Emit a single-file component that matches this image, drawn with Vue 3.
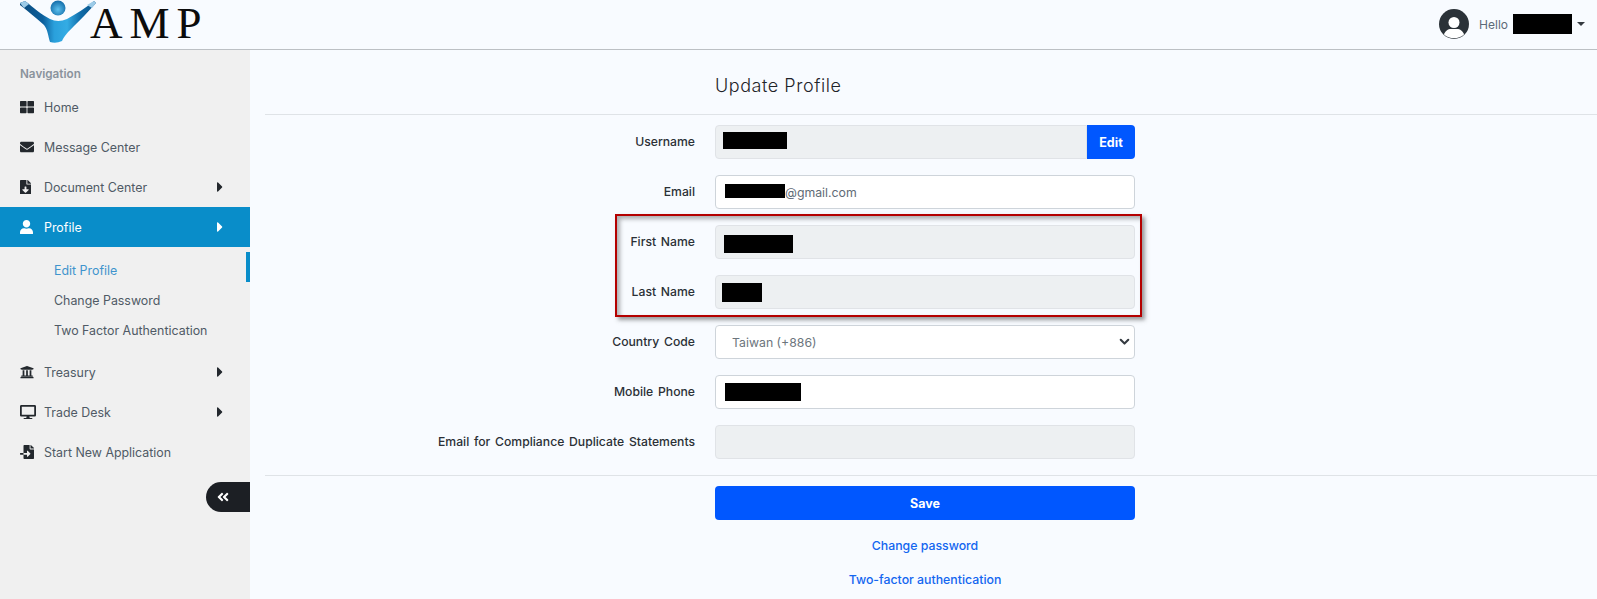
<template>
  <div class="page">
    <header class="topbar">
      <div class="logo">
        <svg class="logo__mark" width="78" height="44" viewBox="0 0 78 44">
          <defs>
            <linearGradient id="figure" x1="0" y1="0" x2="1" y2="0">
              <stop offset="0" stop-color="#0a4a7c" />
              <stop offset="0.3" stop-color="#0c5f9c" />
              <stop offset="0.45" stop-color="#2aa0dc" />
              <stop offset="0.62" stop-color="#34ace4" />
              <stop offset="0.8" stop-color="#0f6ba8" />
              <stop offset="1" stop-color="#0b5286" />
            </linearGradient>
            <radialGradient id="head" cx="0.5" cy="0.6" r="0.6">
              <stop offset="0" stop-color="#5cc0ee" />
              <stop offset="1" stop-color="#116ba8" />
            </radialGradient>
          </defs>
          <path d="M0 3 L5 1 C14 8 22 15 30 19 Q38 23 47 19 C56 14 66 8 74 1 L76 3 C68 12 60 20 54 26 C48 32 44 36 42 41 Q36 44 30 42 C28 36 28 30 24 25 C16 18 8 11 0 5 Z" fill="url(#figure)" />
          <circle cx="38" cy="8" r="7.5" fill="url(#head)" />
          <path d="M0 3 L5 1 L9 4 L4 8Z" fill="#9ccbe8" />
          <path d="M74 1 L76 3 L72 8 L67 5Z" fill="#9ccbe8" />
        </svg>
        <span class="logo__text">AMP</span>
      </div>
      <div class="user">
        <svg class="user__avatar" viewBox="0 0 30 30" width="30" height="30">
          <circle cx="15" cy="15" r="15" fill="#2b3238" />
          <circle cx="15" cy="13.5" r="5.5" fill="#fff" />
          <path d="M5 25.5 C6 22 9 20 12 20 H18 C21 20 24 22 25 25.5 A15 15 0 0 1 5 25.5Z" fill="#fff" />
        </svg>
        <span class="user__hello">Hello</span>
        <span class="user__name"></span>
        <span class="user__caret"></span>
      </div>
    </header>

    <div class="layout">
      <aside class="sidebar">
        <div class="sidebar__title">Navigation</div>
        <nav>
          <template v-for="item in nav" :key="item.label">
            <a :class="['nav-item', { 'nav-item--active': item.active }]">
              <span class="nav-item__icon">
                <svg :viewBox="`0 0 ${item.vw} 512`" :width="item.size" :height="item.size * 512 / item.vw" fill="currentColor">
                  <path :d="icons[item.icon]" />
                </svg>
              </span>
              <span class="nav-item__label">{{ item.label }}</span>
              <svg v-if="item.arrow" class="nav-item__arrow" viewBox="0 0 192 512" width="6" height="16" fill="currentColor">
                <path :d="icons.caret" />
              </svg>
            </a>
            <div v-if="item.children" class="subnav">
              <a
                v-for="sub in item.children"
                :key="sub.label"
                :class="['subnav__item', { 'subnav__item--active': sub.active }]"
              >{{ sub.label }}</a>
            </div>
          </template>
        </nav>
        <div class="sidebar__foot">
          <button class="collapse">
            <svg viewBox="0 0 448 512" width="12" height="14" fill="#fff"><path :d="icons.doubleLeft" /></svg>
          </button>
        </div>
      </aside>

      <main class="content">
        <h1 class="content__title">Update Profile</h1>
        <hr class="rule rule--top" />

        <form class="form" @submit.prevent>
          <div class="form__group">
            <template v-for="row in topRows" :key="row.label">
              <FieldRow :row="row" />
            </template>
          </div>

          <div class="form__group form__group--marked">
            <div class="marker"></div>
            <template v-for="row in nameRows" :key="row.label">
              <FieldRow :row="row" />
            </template>
          </div>

          <div class="form__group">
            <div class="form-row">
              <label class="form-row__label">Country Code</label>
              <div class="select-wrap">
                <select class="control control--select">
                  <option>Taiwan (+886)</option>
                </select>
                <svg class="select-wrap__chevron" viewBox="0 0 16 16" width="11" height="11" fill="none" stroke="#343a40" stroke-width="3" stroke-linecap="round" stroke-linejoin="round">
                  <path d="M2.5 5.5l5.5 5.5 5.5-5.5" />
                </svg>
              </div>
            </div>
            <template v-for="row in bottomRows" :key="row.label">
              <FieldRow :row="row" />
            </template>
          </div>
        </form>

        <hr class="rule rule--bottom" />

        <div class="actions">
          <button class="save">Save</button>
          <a class="link">Change password</a>
          <a class="link">Two-factor authentication</a>
        </div>
      </main>
    </div>
  </div>
</template>

<script setup>
import { h } from 'vue';

const icons = {
  caret: 'M0 384.662V127.338c0-17.818 21.543-26.741 34.142-14.142l128.662 128.662c7.81 7.81 7.81 20.474 0 28.284L34.142 398.804C21.543 411.404 0 402.48 0 384.662z',
  thLarge: 'M296 32h192c13.255 0 24 10.745 24 24v160c0 13.255-10.745 24-24 24H296c-13.255 0-24-10.745-24-24V56c0-13.255 10.745-24 24-24zm-80 0H24C10.745 32 0 42.745 0 56v160c0 13.255 10.745 24 24 24h192c13.255 0 24-10.745 24-24V56c0-13.255-10.745-24-24-24zM0 296v160c0 13.255 10.745 24 24 24h192c13.255 0 24-10.745 24-24V296c0-13.255-10.745-24-24-24H24c-13.255 0-24 10.745-24 24zm296 184h192c13.255 0 24-10.745 24-24V296c0-13.255-10.745-24-24-24H296c-13.255 0-24 10.745-24 24v160c0 13.255 10.745 24 24 24z',
  envelope: 'M502.3 190.8c3.9-3.1 9.7-.2 9.7 4.7V400c0 26.5-21.5 48-48 48H48c-26.5 0-48-21.5-48-48V195.6c0-5 5.7-7.8 9.7-4.7 22.4 17.4 52.1 39.5 154.1 113.6 21.1 15.4 56.7 47.8 92.2 47.6 35.7.3 72-32.8 92.3-47.6 102-74.1 131.6-96.3 154-113.7zM256 320c23.2.4 56.6-29.2 73.4-41.4 132.7-96.3 142.8-104.7 173.4-128.7 5.8-4.5 9.2-11.5 9.2-18.9v-19c0-26.5-21.5-48-48-48H48C21.5 64 0 85.5 0 112v19c0 7.4 3.4 14.3 9.2 18.9 30.6 23.9 40.7 32.4 173.4 128.7 16.8 12.2 50.2 41.8 73.4 41.4z',
  fileDownload: 'M224 136V0H24C10.7 0 0 10.7 0 24v464c0 13.3 10.7 24 24 24h336c13.3 0 24-10.7 24-24V160H248c-13.2 0-24-10.8-24-24zm76.45 211.36l-96.42 95.7c-6.65 6.61-17.39 6.61-24.04 0l-96.42-95.7C73.42 337.29 80.54 320 94.82 320H160v-80c0-8.84 7.16-16 16-16h32c8.84 0 16 7.16 16 16v80h65.18c14.28 0 21.4 17.29 11.27 27.36zM377 105L279.1 7c-4.5-4.5-10.6-7-17-7H256v128h128v-6.1c0-6.3-2.5-12.4-7-16.9z',
  user: 'M224 256c70.7 0 128-57.3 128-128S294.7 0 224 0 96 57.3 96 128s57.3 128 128 128zm89.6 32h-16.7c-22.2 10.2-46.9 16-72.9 16s-50.6-5.8-72.9-16h-16.7C60.2 288 0 348.2 0 422.4V464c0 26.5 21.5 48 48 48h352c26.5 0 48-21.5 48-48v-41.6c0-74.2-60.2-134.4-134.4-134.4z',
  university: 'M496 128v16a8 8 0 0 1-8 8h-24v12c0 6.627-5.373 12-12 12H60c-6.627 0-12-5.373-12-12v-12H24a8 8 0 0 1-8-8v-16a8 8 0 0 1 4.941-7.392l232-88a7.996 7.996 0 0 1 6.118 0l232 88A8 8 0 0 1 496 128zm-24 304H40c-13.255 0-24 10.745-24 24v16a8 8 0 0 0 8 8h464a8 8 0 0 0 8-8v-16c0-13.255-10.745-24-24-24zM96 192v192H60c-6.627 0-12 5.373-12 12v20h416v-20c0-6.627-5.373-12-12-12h-36V192h-64v192h-64V192h-64v192h-64V192H96z',
  desktop: 'M528 0H48C21.5 0 0 21.5 0 48v320c0 26.5 21.5 48 48 48h192l-16 48h-72c-13.3 0-24 10.7-24 24s10.7 24 24 24h272c13.3 0 24-10.7 24-24s-10.7-24-24-24h-72l-16-48h192c26.5 0 48-21.5 48-48V48c0-26.5-21.5-48-48-48zm-16 352H64V64h448v288z',
  fileImport: 'M16 288c-8.8 0-16 7.2-16 16v32c0 8.8 7.2 16 16 16h112v-64zm489-183L407.1 7c-4.5-4.5-10.6-7-17-7H384v128h128v-6.1c0-6.3-2.5-12.4-7-16.9zm-153 31V0H152c-13.3 0-24 10.7-24 24v264h128v-65.2c0-14.3 17.3-21.4 27.4-11.3L379 308c6.6 6.7 6.6 17.4 0 24l-95.7 96.4c-10.1 10.1-27.4 3-27.4-11.3V352H128v136c0 13.3 10.7 24 24 24h336c13.3 0 24-10.7 24-24V160H376c-13.2 0-24-10.8-24-24z',
  doubleLeft: 'M223.7 239l136-136c9.4-9.4 24.6-9.4 33.9 0l22.6 22.6c9.4 9.4 9.4 24.6 0 33.9L319.9 256l96.4 96.4c9.4 9.4 9.4 24.6 0 33.9L393.7 409c-9.4 9.4-24.6 9.4-33.9 0l-136-136c-9.5-9.4-9.5-24.6-.1-34zm-192 34l136 136c9.4 9.4 24.6 9.4 33.9 0l22.6-22.6c9.4-9.4 9.4-24.6 0-33.9L127.9 256l96.4-96.4c9.4-9.4 9.4-24.6 0-33.9L201.7 103c-9.4-9.4-24.6-9.4-33.9 0l-136 136c-9.5 9.4-9.5 24.6-.1 34z'
};

const nav = [
  { label: 'Home', icon: 'thLarge', vw: 512, size: 14 },
  { label: 'Message Center', icon: 'envelope', vw: 512, size: 14 },
  { label: 'Document Center', icon: 'fileDownload', vw: 384, size: 11, arrow: true },
  {
    label: 'Profile',
    icon: 'user',
    vw: 448,
    size: 13,
    arrow: true,
    active: true,
    children: [
      { label: 'Edit Profile', active: true },
      { label: 'Change Password' },
      { label: 'Two Factor Authentication' }
    ]
  },
  { label: 'Treasury', icon: 'university', vw: 512, size: 14, arrow: true },
  { label: 'Trade Desk', icon: 'desktop', vw: 576, size: 16, arrow: true },
  { label: 'Start New Application', icon: 'fileImport', vw: 512, size: 14 }
];

// redact: [left from field edge, top shift, width, height]
const topRows = [
  { label: 'Username', disabled: true, edit: true, redact: [7, -2, 64, 17] },
  { label: 'Email', text: '@gmail.com', redact: [9, -1, 60, 14] }
];
const nameRows = [
  { label: 'First Name', disabled: true, redact: [8, 2, 69, 18] },
  { label: 'Last Name', disabled: true, redact: [6, 0, 40, 19] }
];
const bottomRows = [
  { label: 'Mobile Phone', redact: [9, 0, 76, 18] },
  { label: 'Email for Compliance Duplicate Statements', disabled: true }
];

// small local row component, the form repeats this markup a lot
const FieldRow = (props) => {
  const { row } = props;
  const inner = [];
  if (row.redact) {
    const [x, y, w, hgt] = row.redact;
    inner.push(h('span', {
      class: 'redact',
      style: { marginLeft: `${x}px`, width: `${w}px`, height: `${hgt}px`, transform: `translateY(${y}px)` }
    }));
  }
  if (row.text) inner.push(h('span', { class: 'control__text' }, row.text));
  const control = h('div', { class: ['control', { 'control--disabled': row.disabled, 'control--edit': row.edit }] }, inner);
  const field = row.edit
    ? h('div', { class: 'input-group' }, [control, h('button', { class: 'edit', type: 'button' }, 'Edit')])
    : control;
  return h('div', { class: 'form-row' }, [
    h('label', { class: 'form-row__label' }, row.label),
    field
  ]);
};
FieldRow.props = ['row'];
</script>

<style>
html, body {
  margin: 0;
  background: #f8fbff;
  overflow: hidden;
}
.form-row {
  display: grid;
  grid-template-columns: 430px 420px;
  column-gap: 20px;
  align-items: center;
  height: 34px;
}
.form-row__label {
  text-align: right;
  font-size: 12.2px;
  word-spacing: 1.5px;
  font-weight: 500;
  color: #2b3036;
  transform: translateY(-1px);
}
.control {
  box-sizing: border-box;
  height: 34px;
  display: flex;
  align-items: center;
  background: #fff;
  border: 1px solid #ced4da;
  border-radius: 4px;
  font-family: Inter, "Open Sans", sans-serif;
  font-size: 12.3px;
  color: #6c757d;
}
.control--disabled {
  background: #edf0f2;
  border-color: #e0e3e7;
}
.control--edit {
  flex: 1;
  border-top-right-radius: 0;
  border-bottom-right-radius: 0;
}
.control__text {
  color: #5f6b76;
}
.redact {
  display: block;
  flex: none;
  background: #000;
}
.input-group {
  display: flex;
}
.edit {
  width: 48px;
  height: 34px;
  border: none;
  border-radius: 0 4px 4px 0;
  background: #0057ff;
  color: #fff;
  font-family: Inter, sans-serif;
  font-size: 12.5px;
  font-weight: 700;
}
</style>

<style scoped>
.page {
  width: 1597px;
  height: 599px;
  overflow: hidden;
  font-family: Inter, "Open Sans", sans-serif;
  background: #f8fbff;
}

.topbar {
  box-sizing: border-box;
  height: 50px;
  border-bottom: 1px solid #bcc0c4;
  display: flex;
  align-items: flex-start;
  justify-content: space-between;
}
.logo {
  display: flex;
  align-items: flex-start;
  padding-left: 20px;
}
.logo__mark {
  flex: none;
}
.logo__text {
  margin-left: -8px;
  font-family: "Liberation Serif", serif;
  font-size: 45px;
  line-height: 46px;
  letter-spacing: 7px;
  color: #0c0c0c;
}
.user {
  display: flex;
  align-items: center;
  height: 48px;
  padding-right: 12px;
}
.user__avatar {
  margin-right: 10px;
}
.user__hello {
  font-size: 12px;
  color: #5d6a78;
}
.user__name {
  width: 59px;
  height: 20px;
  margin-left: 5px;
  background: #000;
}
.user__caret {
  margin-left: 5px;
  border-left: 4px solid transparent;
  border-right: 4px solid transparent;
  border-top: 4px solid #343a40;
}

.layout {
  display: flex;
  height: 549px;
}

.sidebar {
  box-sizing: border-box;
  width: 250px;
  flex: none;
  background: #f0f0f0;
  padding-top: 16px;
}
.sidebar__title {
  height: 16px;
  line-height: 16px;
  margin-bottom: 5px;
  padding-left: 20px;
  font-size: 11.7px;
  font-weight: 600;
  color: #8a939c;
}
.nav-item {
  display: flex;
  align-items: center;
  height: 40px;
  padding: 0 27px 0 20px;
  font-size: 12.4px;
  color: #4f5a65;
}
.nav-item__icon {
  width: 24px;
  flex: none;
  display: flex;
  color: #23282d;
}
.nav-item__label {
  flex: 1;
}
.nav-item__arrow {
  color: #23282d;
}
.nav-item--active {
  background: #098dc9;
  color: #fff;
}
.nav-item--active .nav-item__icon,
.nav-item--active .nav-item__arrow {
  color: #fff;
}
.subnav {
  display: flex;
  flex-direction: column;
  padding: 9px 0 6px;
}
.subnav__item {
  position: relative;
  height: 30px;
  line-height: 30px;
  padding-left: 54px;
  font-size: 12.4px;
  color: #4f5a65;
}
.subnav__item--active {
  color: #3f94cd;
}
.subnav__item--active::after {
  content: "";
  position: absolute;
  right: 0;
  top: -4px;
  width: 4px;
  height: 30px;
  background: #098dc9;
}
.sidebar__foot {
  display: flex;
  justify-content: flex-end;
  margin-top: 10px;
}
.collapse {
  box-sizing: border-box;
  width: 44px;
  height: 30px;
  border: none;
  padding: 0 0 0 11px;
  border-radius: 15px 0 0 15px;
  background: #1c1f24;
  display: flex;
  align-items: center;
}

.content {
  flex: 1;
  padding-left: 15px;
}
.content__title {
  margin: 25px 0 0 450px;
  height: 22px;
  line-height: 22px;
  font-size: 18px;
  font-weight: 300;
  letter-spacing: 0.55px;
  color: #1f2429;
}
.rule {
  border: none;
  border-top: 1px solid #dfe3e7;
  margin: 0;
}
.rule--top {
  margin-top: 17px;
  margin-bottom: 10px;
}
.rule--bottom {
  margin-top: 16px;
  margin-bottom: 10px;
}
.form {
  display: flex;
  flex-direction: column;
  gap: 16px;
}
.form__group {
  display: flex;
  flex-direction: column;
  gap: 16px;
}
.form__group--marked {
  position: relative;
}
.marker {
  position: absolute;
  left: 350px;
  top: -11px;
  box-sizing: border-box;
  width: 527px;
  height: 103px;
  border: 2px solid #b40000;
  box-shadow: 3px 3px 4px rgba(60, 60, 60, 0.5), inset 3px 3px 4px rgba(60, 60, 60, 0.4);
  pointer-events: none;
}
.select-wrap {
  position: relative;
}
.control--select {
  display: block;
  width: 100%;
  padding-left: 16px;
  appearance: none;
  outline: none;
}
.select-wrap__chevron {
  position: absolute;
  right: 5px;
  top: 11px;
}
.actions {
  margin-left: 450px;
  width: 420px;
  display: flex;
  flex-direction: column;
  align-items: center;
}
.save {
  width: 100%;
  height: 34px;
  border: none;
  border-radius: 4px;
  background: #0057ff;
  color: #fff;
  font-family: Inter, sans-serif;
  font-size: 12.5px;
  font-weight: 700;
}
.link {
  height: 16px;
  line-height: 16px;
  margin-top: 18px;
  font-size: 12.3px;
  font-weight: 500;
  color: #1366f0;
}
</style>
